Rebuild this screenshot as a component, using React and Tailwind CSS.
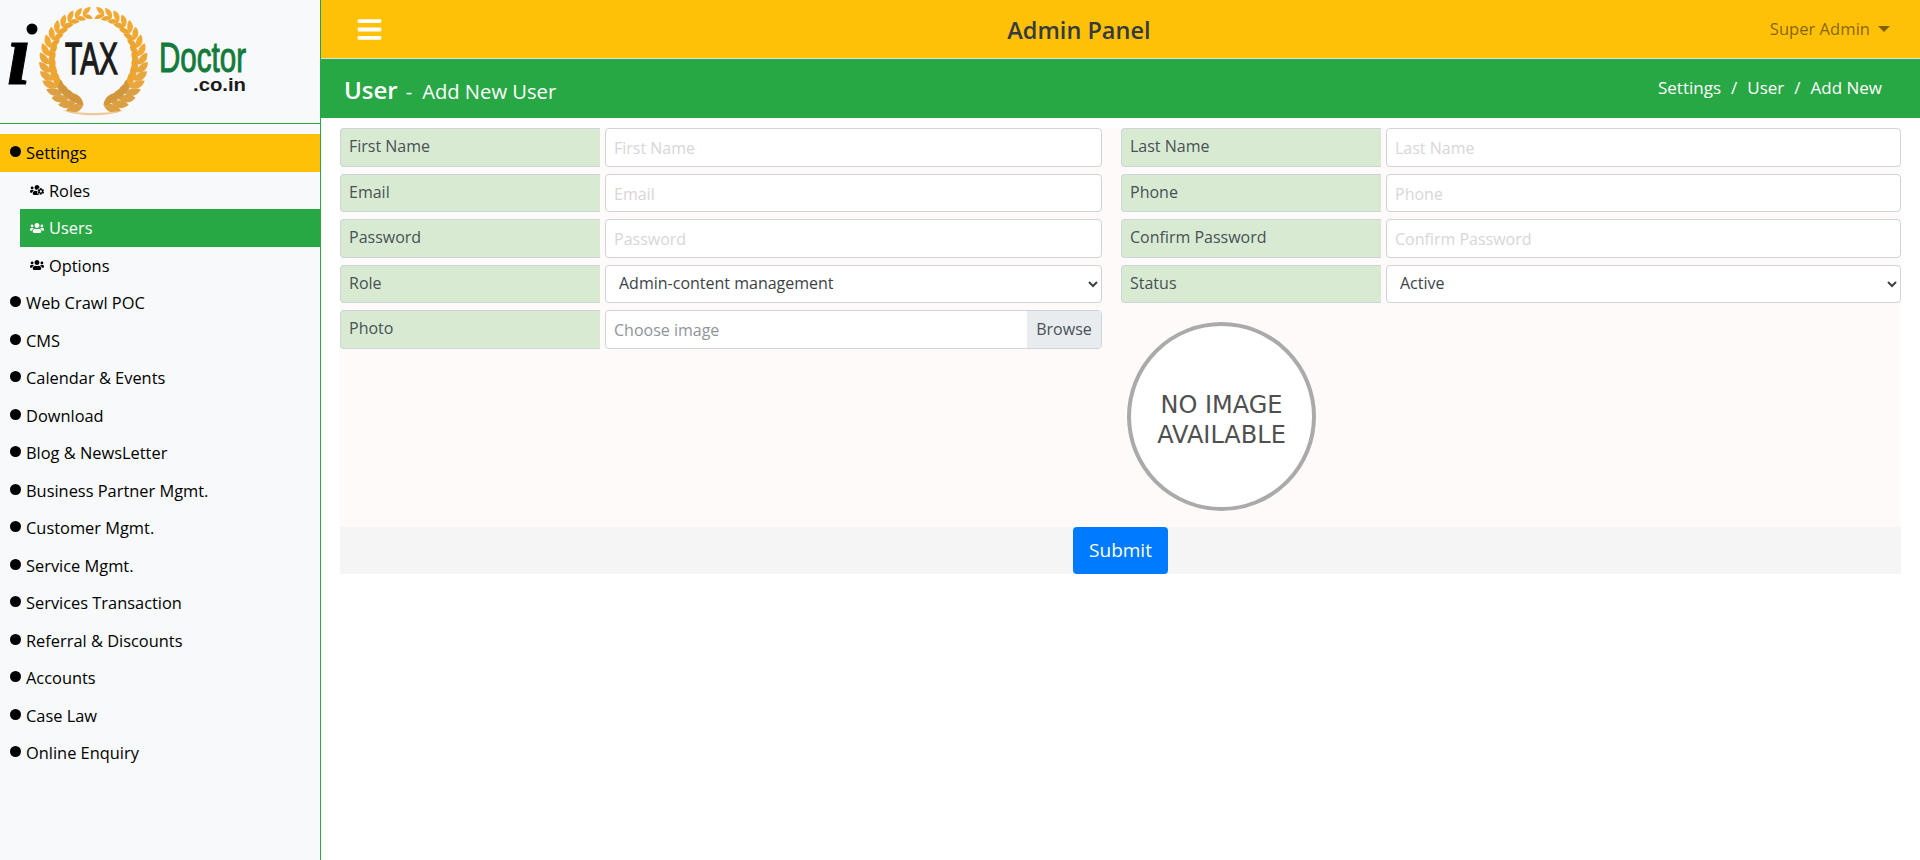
import React from 'react';
import { FaBars, FaUsers, FaUsersCog } from 'react-icons/fa';

const menu = [
  'Web Crawl POC',
  'CMS',
  'Calendar & Events',
  'Download',
  'Blog & NewsLetter',
  'Business Partner Mgmt.',
  'Customer Mgmt.',
  'Service Mgmt.',
  'Services Transaction',
  'Referral & Discounts',
  'Accounts',
  'Case Law',
  'Online Enquiry',
];

const leaves = [];
for (let i = 0; i < 16; i++) {
  leaves.push(13 + i * 10.2);
}

const Leaf = ({ x, y, rot, len, w, fill }) => (
  <path
    transform={`translate(${x} ${y}) rotate(${rot})`}
    d={`M0 0 C ${len * 0.3} ${-w} ${len * 0.7} ${-w} ${len} 0 C ${len * 0.7} ${w * 0.7} ${len * 0.3} ${w * 0.7} 0 0Z`}
    fill={fill}
  />
);

// left side of the wreath, mirrored for the other
const Branch = ({ flip }) => (
  <g transform={flip ? 'translate(187 0) scale(-1 1)' : undefined}>
    {leaves.map((a) => {
      const r = (a * Math.PI) / 180;
      const x = 93.5 - 44.5 * Math.sin(r);
      const y = 60 + 46 * Math.cos(r);
      const rot = (Math.atan2(-46 * Math.sin(r), -44.5 * Math.cos(r)) * 180) / Math.PI;
      const t = a / 180;
      const len = 19 - t * 8;
      const w = 6.6 - t * 3;
      const fill = a < 50 ? '#dca044' : a < 90 ? '#e8a63c' : '#f2aa35';
      return (
        <g key={a}>
          <Leaf x={x} y={y} rot={rot - 32} len={len} w={w} fill={fill} />
          <Leaf x={x} y={y} rot={rot + 32} len={len * 0.9} w={w * 0.9} fill={a < 50 ? '#d2963c' : '#eba530'} />
        </g>
      );
    })}
  </g>
);

const Logo = () => (
  <svg width="260" height="123" viewBox="0 0 260 123">
    <Branch />
    <Branch flip />
    <path d="M62 110 C 78 117 108 117 125 110 C 108 114 78 114 62 110Z" fill="#ecc998" />
    <circle cx="32" cy="29" r="5.5" fill="#000" />
    <text x="7" y="84" fontFamily="'Liberation Serif', serif" fontSize="88" fontWeight="700" fontStyle="italic" stroke="#000" strokeWidth="1" textLength="24" lengthAdjust="spacingAndGlyphs">
      ı
    </text>
    <text x="65" y="74" fontFamily="'Liberation Sans', sans-serif" fontSize="45" fill="#1b1b1b" stroke="#1b1b1b" strokeWidth="1.4" textLength="53" lengthAdjust="spacingAndGlyphs">
      TAX
    </text>
    <text x="159" y="72" fontFamily="'Liberation Sans', sans-serif" fontSize="42" fill="#127a3b" stroke="#127a3b" strokeWidth="1" textLength="87" lengthAdjust="spacingAndGlyphs">
      Doctor
    </text>
    <text x="193" y="91" fontFamily="'Liberation Sans', sans-serif" fontSize="19" fontWeight="700" fill="#1b1b1b" textLength="53" lengthAdjust="spacingAndGlyphs">
      .co.in
    </text>
  </svg>
);

const MenuItem = ({ label, active }) => (
  <div className={`flex h-[37.5px] items-center pl-[10px] text-[16.4px] text-black ${active ? 'bg-[#ffc107]' : ''}`}>
    <span className="mr-[5px] h-[11px] w-[11px] -translate-y-[1px] rounded-full bg-black" />
    <span className="translate-y-[1px]">{label}</span>
  </div>
);

const SubItem = ({ label, icon: Icon, active }) => (
  <div className={`ml-[20px] flex h-[37.5px] items-center pl-[10px] text-[16.4px] ${active ? 'bg-[#28a745] text-white' : 'text-black'}`}>
    <Icon className="mr-[5px] h-[14px] w-[14px]" />
    <span className="translate-y-[1px]">{label}</span>
  </div>
);

const Label = ({ children, w }) => (
  <div className={`flex h-[38.5px] shrink-0 items-start rounded-l border border-[#ced4da] border-r-0 bg-[#d8ebd2] px-[8px] pt-[5px] text-[#495057] ${w}`}>
    {children}
  </div>
);

const Field = ({ label, w }) => (
  <div className="flex h-[38.5px] gap-[5px]">
    <Label w={w}>{label}</Label>
    <input
      placeholder={label}
      className="h-[38.5px] min-w-0 flex-1 rounded border border-[#ced4da] bg-white px-[8px] pt-[2px] text-[#495057] outline-none placeholder:text-[#d9d6d6]"
    />
  </div>
);

const SelectField = ({ label, value, w }) => (
  <div className="flex h-[38.5px] gap-[5px]">
    <Label w={w}>{label}</Label>
    <select defaultValue={value} className="h-[38.5px] min-w-0 flex-1 rounded border border-[#ced4da] bg-white px-[9px] pb-[1px] text-[#3c4248] outline-none">
      <option>{value}</option>
    </select>
  </div>
);

const App = () => {
  return (
    <div className="flex h-screen overflow-hidden bg-white text-[16px]" style={{ fontFamily: "'Open Sans', 'Noto Sans', sans-serif" }}>
      <aside className="h-full w-[321px] shrink-0 border-r border-[#28a745] bg-[#f8f9fa]">
        <div className="h-[124px] border-b border-[#28a745]">
          <Logo />
        </div>
        <nav className="mt-[10px]">
          <MenuItem label="Settings" active />
          <SubItem label="Roles" icon={FaUsersCog} />
          <SubItem label="Users" icon={FaUsers} active />
          <SubItem label="Options" icon={FaUsers} />
          {menu.map((m) => (
            <MenuItem key={m} label={m} />
          ))}
        </nav>
      </aside>

      <main className="min-w-0 flex-1">
        <header className="flex h-[59px] items-center justify-between border-b border-[#dee2e6] bg-[#ffc107] pr-[30px] pl-[36px]">
          <FaBars className="h-[27px] w-[25px] text-white" />
          <div className="mt-[3px] ml-[6px] text-[23.5px] font-[550] text-[#343a40]">Admin Panel</div>
          <div className="mt-[1px] flex items-center text-[16.6px] text-[rgba(0,0,0,0.5)]">
            Super Admin
            <span className="ml-[8px] border-x-[6px] border-t-[6px] border-x-transparent border-t-[rgba(0,0,0,0.5)]" />
          </div>
        </header>

        <div className="flex h-[59px] items-center justify-between bg-[#28a745] pr-[38px] pl-[23px] text-white">
          <div className="mt-[2px] flex items-baseline">
            <span className="text-[24px] font-semibold">User</span>
            <span className="mr-[10px] ml-[8px] text-[20px]">-</span>
            <span className="text-[20.2px]">Add New User</span>
          </div>
          <div className="-mt-[2px] flex gap-[10px] text-[17px]">
            <span>Settings</span>
            <span>/</span>
            <span>User</span>
            <span>/</span>
            <span>Add New</span>
          </div>
        </div>

        <div className="mx-[19px] mt-[10px]">
          <form className="flex bg-[#fffafa]">
            <div className="flex w-[762px] flex-col gap-[7px]">
              <Field label="First Name" w="w-[260px]" />
              <Field label="Email" w="w-[260px]" />
              <Field label="Password" w="w-[260px]" />
              <SelectField label="Role" value="Admin-content management" w="w-[260px]" />
              <div className="flex h-[38.5px] gap-[5px]">
                <Label w="w-[260px]">Photo</Label>
                <div className="flex min-w-0 flex-1 overflow-hidden rounded border border-[#ced4da] bg-white text-[#8f959a]">
                  <span className="flex flex-1 items-center px-[8px] pt-[2px]">Choose image</span>
                  <span className="flex w-[74px] items-center justify-center bg-[#e9ecef] text-[#495057]">Browse</span>
                </div>
              </div>
            </div>
            <div className="ml-[19px] flex w-[780px] flex-col gap-[7px]">
              <Field label="Last Name" w="w-[260px]" />
              <Field label="Phone" w="w-[260px]" />
              <Field label="Confirm Password" w="w-[260px]" />
              <SelectField label="Status" value="Active" w="w-[260px]" />
              <div className="mt-[12px] mb-[16px] ml-[6px] flex h-[189px] w-[189px] flex-col items-center justify-center rounded-full border-[4px] border-[#aaaaaa] bg-white pt-[7px] text-center text-[24px] leading-[30px] text-[#505050]" style={{ fontFamily: "'DejaVu Sans', sans-serif" }}>
                <span>NO IMAGE</span>
                <span>AVAILABLE</span>
              </div>
            </div>
          </form>
          <div className="flex justify-center bg-[#f5f5f5]">
            <button type="button" className="h-[47px] w-[95px] rounded bg-[#007bff] text-[19px] text-white">
              Submit
            </button>
          </div>
        </div>
      </main>
    </div>
  );
};

export default App;
